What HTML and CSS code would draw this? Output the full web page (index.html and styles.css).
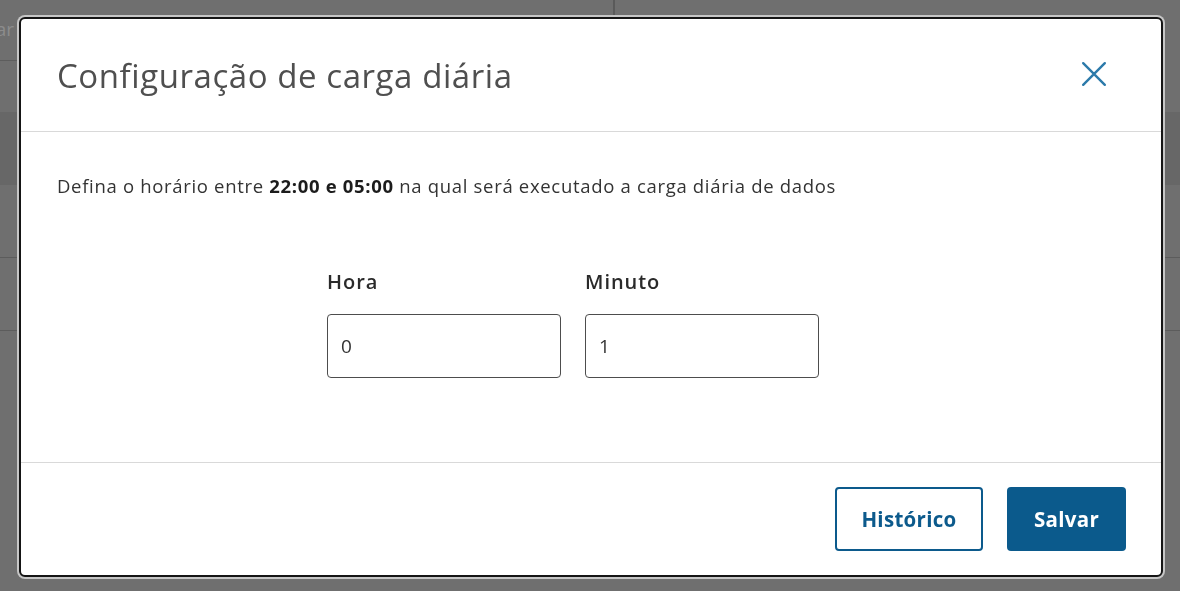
FILE: index.html
```html
<!DOCTYPE html>
<html lang="pt-BR">
<head>
<meta charset="utf-8">
<title>Configuração de carga diária</title>
<link rel="stylesheet" href="styles.css">
</head>
<body>
<div class="backdrop">
  <div class="bg-top">
    <div class="bg-search"><span class="bg-search-text">Pesquisar</span></div>
  </div>
  <div class="bg-row bg-row-a"></div>
  <div class="bg-band"></div>
  <div class="bg-row bg-row-b"></div>
  <div class="bg-row bg-row-b"></div>
</div>

<div class="modal" role="dialog" aria-labelledby="modal-title">
  <header class="modal-header">
    <h1 id="modal-title" class="modal-title">Configuração de carga diária</h1>
    <button class="modal-close" aria-label="Fechar">
      <svg viewBox="0 0 24 24" width="26" height="26" aria-hidden="true">
        <path d="M2 2 L22 22 M22 2 L2 22" fill="none" stroke="currentColor" stroke-width="2.2" stroke-linecap="round"/>
      </svg>
    </button>
  </header>
  <section class="modal-body">
    <p class="modal-text">Defina o horário entre <strong>22:00 e 05:00</strong> na qual será executado a carga diária de dados</p>
    <div class="fields">
      <label class="field">
        <span class="field-label">Hora</span>
        <span class="field-input">0</span>
      </label>
      <label class="field">
        <span class="field-label">Minuto</span>
        <span class="field-input">1</span>
      </label>
    </div>
  </section>
  <footer class="modal-footer">
    <button class="btn btn-secondary">Histórico</button>
    <button class="btn btn-primary">Salvar</button>
  </footer>
</div>
</body>
</html>
```

FILE: styles.css
```css
* { box-sizing: border-box; }

html, body {
  margin: 0;
  height: 100%;
}

body {
  background: #6f6f6f;
  font-family: "Open Sans", "Noto Sans", sans-serif;
  overflow: hidden;
}

/* faint page behind the overlay */
.backdrop {
  display: flex;
  flex-direction: column;
}

.bg-top {
  height: 61px;
  display: flex;
}

.bg-search {
  width: 615px;
  border-right: 2px solid #5a5a5a;
  border-bottom: 1px solid #5d5d5d;
  display: flex;
  align-items: center;
}

.bg-search-text {
  width: 14px;
  display: flex;
  justify-content: flex-end;
  white-space: nowrap;
  margin-top: -2px;
  color: #8c8c8c;
  font-size: 19px;
}

.bg-row-a { height: 51px; }

.bg-band {
  height: 73px;
  background: #676767;
}

.bg-row-b {
  height: 73px;
  border-bottom: 1px solid #5c5c5c;
}

/* modal */
.modal {
  position: fixed;
  left: 19px;
  top: 17px;
  width: 1144px;
  height: 560px;
  background: #fff;
  border: 2px solid #151515;
  border-radius: 6px;
  box-shadow: 0 0 0 2px #c6c6c6;
  display: flex;
  flex-direction: column;
  overflow: hidden;
}

.modal-header {
  height: 113px;
  flex: none;
  display: flex;
  align-items: center;
  justify-content: space-between;
  padding: 0 52px 0 36px;
  border-bottom: 1px solid #d9d9d9;
}

.modal-title {
  margin: 0;
  font-size: 33px;
  font-weight: 400;
  letter-spacing: 0.57px;
  color: #4f4f4f;
}

.modal-close {
  border: 0;
  background: none;
  padding: 0;
  width: 30px;
  height: 30px;
  display: flex;
  align-items: center;
  justify-content: center;
  color: #2c7aaa;
  margin-top: -2px;
}

.modal-body {
  flex: 1;
  padding: 42px 36px 0;
  border-bottom: 1px solid #d9d9d9;
}

.modal-text {
  margin: 0;
  font-size: 18.5px;
  line-height: 24px;
  letter-spacing: 0.68px;
  color: #333;
}

.modal-text strong {
  font-weight: 700;
  color: #1c1c1c;
}

.fields {
  display: flex;
  gap: 24px;
  margin-top: 72px;
  margin-left: 270px;
}

.field {
  display: flex;
  flex-direction: column;
  gap: 20px;
  width: 234px;
}

.field-label {
  font-size: 20px;
  line-height: 24px;
  font-weight: 600;
  letter-spacing: 0.95px;
  color: #2a2a2a;
}

.field-input {
  height: 64px;
  border: 1px solid #4d4d4d;
  border-radius: 4px;
  padding: 0 13px;
  display: flex;
  align-items: center;
  font-size: 19px;
  color: #333;
}

.modal-footer {
  height: 112px;
  flex: none;
  display: flex;
  align-items: center;
  justify-content: flex-end;
  gap: 24px;
  padding: 0 35px;
}

.btn {
  height: 64px;
  border-radius: 4px;
  font-family: "Open Sans", "Noto Sans", sans-serif;
  font-size: 20.5px;
  font-weight: 700;
  letter-spacing: 0.3px;
  cursor: pointer;
  padding: 0;
}

.btn-secondary {
  width: 148px;
  background: #fff;
  border: 2px solid #0c5a8c;
  color: #0c5a8c;
}

.btn-primary {
  width: 119px;
  background: #0b5a8c;
  border: 0;
  color: #fff;
}
```
